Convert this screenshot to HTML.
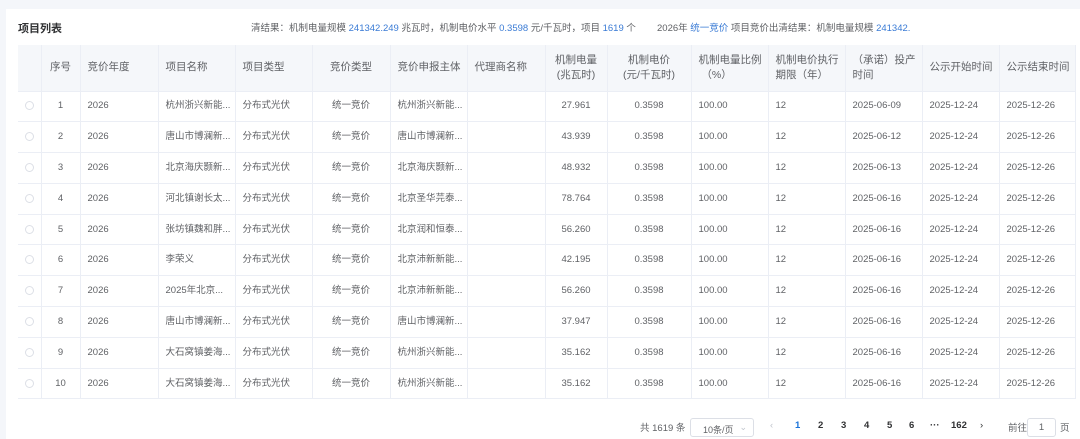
<!DOCTYPE html>
<html><head><meta charset="utf-8"><style>
*{box-sizing:border-box;margin:0;padding:0}
body{width:1080px;height:439px;background:#f4f6fa;font-family:"Liberation Sans","Noto Sans CJK SC",sans-serif;color:#606266;font-size:10px;overflow:hidden;position:relative}
.card{position:absolute;left:6px;top:9px;width:1074px;height:430px;background:#fff}
.title{position:absolute;left:18px;top:20px;font-size:11px;font-weight:bold;color:#303133}
.sum{position:absolute;left:251px;top:20px;font-size:9.5px;color:#606266;white-space:nowrap}
.sum b{font-weight:normal;color:#3a7bd5}
table{position:absolute;left:18px;top:45px;border-collapse:collapse;table-layout:fixed;width:1058px}
th{background:#f5f7fa;height:46px;font-weight:normal;color:#606266;font-size:10.5px;text-align:left;padding-left:7px;border-right:1px solid #ebeef5;border-bottom:1px solid #ebeef5;line-height:15px}
td{height:30.8px;border-right:1px solid #ebeef5;border-bottom:1px solid #ebeef5;padding-left:7px;white-space:nowrap;overflow:hidden;font-size:9.5px;line-height:14px;vertical-align:middle}
td span.t{display:inline-block;line-height:14px;vertical-align:middle}
.c{text-align:center;padding-left:0}
.r{display:inline-block;width:9px;height:9px;border:1px solid #dcdfe6;border-radius:50%;vertical-align:middle}
.pg{position:absolute;top:420px;font-size:9.5px;color:#303133}
</style></head><body>
<div class="card"></div>
<div class="title">项目列表</div>
<div class="sum">清结果：机制电量规模 <b>241342.249</b> 兆瓦时，机制电价水平 <b>0.3598</b> 元/千瓦时，项目 <b>1619</b> 个 &nbsp; &nbsp; &nbsp; &nbsp;2026年 <b>统一竞价</b> 项目竞价出清结果：机制电量规模 <b>241342.</b></div>
<table>
<colgroup><col style="width:23px"><col style="width:39px"><col style="width:78px"><col style="width:77px"><col style="width:77px"><col style="width:78px"><col style="width:77px"><col style="width:78px"><col style="width:62px"><col style="width:84px"><col style="width:77px"><col style="width:77px"><col style="width:77px"><col style="width:77px"><col></colgroup>
<tr><th></th><th class="c">序号</th><th>竞价年度</th><th>项目名称</th><th>项目类型</th><th class="c">竞价类型</th><th>竞价申报主体</th><th>代理商名称</th><th class="c">机制电量<br>(兆瓦时)</th><th class="c">机制电价<br>(元/千瓦时)</th><th>机制电量比例<br>&nbsp;（%）</th><th>机制电价执行<br>期限（年）</th><th>（承诺）投产<br>时间</th><th>公示开始时间</th><th>公示结束时间</th></tr>
<tr><td class="c"><span class="r"></span></td><td class="c">1</td><td>2026</td><td>杭州浙兴新能...</td><td>分布式光伏</td><td class="c">统一竞价</td><td>杭州浙兴新能...</td><td></td><td class="c">27.961</td><td class="c">0.3598</td><td>100.00</td><td>12</td><td>2025-06-09</td><td>2025-12-24</td><td>2025-12-26</td></tr>
<tr><td class="c"><span class="r"></span></td><td class="c">2</td><td>2026</td><td>唐山市博澜新...</td><td>分布式光伏</td><td class="c">统一竞价</td><td>唐山市博澜新...</td><td></td><td class="c">43.939</td><td class="c">0.3598</td><td>100.00</td><td>12</td><td>2025-06-12</td><td>2025-12-24</td><td>2025-12-26</td></tr>
<tr><td class="c"><span class="r"></span></td><td class="c">3</td><td>2026</td><td>北京海庆颢新...</td><td>分布式光伏</td><td class="c">统一竞价</td><td>北京海庆颢新...</td><td></td><td class="c">48.932</td><td class="c">0.3598</td><td>100.00</td><td>12</td><td>2025-06-13</td><td>2025-12-24</td><td>2025-12-26</td></tr>
<tr><td class="c"><span class="r"></span></td><td class="c">4</td><td>2026</td><td>河北镇谢长太...</td><td>分布式光伏</td><td class="c">统一竞价</td><td>北京圣华芫泰...</td><td></td><td class="c">78.764</td><td class="c">0.3598</td><td>100.00</td><td>12</td><td>2025-06-16</td><td>2025-12-24</td><td>2025-12-26</td></tr>
<tr><td class="c"><span class="r"></span></td><td class="c">5</td><td>2026</td><td>张坊镇魏和胖...</td><td>分布式光伏</td><td class="c">统一竞价</td><td>北京润和恒泰...</td><td></td><td class="c">56.260</td><td class="c">0.3598</td><td>100.00</td><td>12</td><td>2025-06-16</td><td>2025-12-24</td><td>2025-12-26</td></tr>
<tr><td class="c"><span class="r"></span></td><td class="c">6</td><td>2026</td><td>李荣义</td><td>分布式光伏</td><td class="c">统一竞价</td><td>北京沛新新能...</td><td></td><td class="c">42.195</td><td class="c">0.3598</td><td>100.00</td><td>12</td><td>2025-06-16</td><td>2025-12-24</td><td>2025-12-26</td></tr>
<tr><td class="c"><span class="r"></span></td><td class="c">7</td><td>2026</td><td>2025年北京...</td><td>分布式光伏</td><td class="c">统一竞价</td><td>北京沛新新能...</td><td></td><td class="c">56.260</td><td class="c">0.3598</td><td>100.00</td><td>12</td><td>2025-06-16</td><td>2025-12-24</td><td>2025-12-26</td></tr>
<tr><td class="c"><span class="r"></span></td><td class="c">8</td><td>2026</td><td>唐山市博澜新...</td><td>分布式光伏</td><td class="c">统一竞价</td><td>唐山市博澜新...</td><td></td><td class="c">37.947</td><td class="c">0.3598</td><td>100.00</td><td>12</td><td>2025-06-16</td><td>2025-12-24</td><td>2025-12-26</td></tr>
<tr><td class="c"><span class="r"></span></td><td class="c">9</td><td>2026</td><td>大石窝镇姜海...</td><td>分布式光伏</td><td class="c">统一竞价</td><td>杭州浙兴新能...</td><td></td><td class="c">35.162</td><td class="c">0.3598</td><td>100.00</td><td>12</td><td>2025-06-16</td><td>2025-12-24</td><td>2025-12-26</td></tr>
<tr><td class="c"><span class="r"></span></td><td class="c">10</td><td>2026</td><td>大石窝镇姜海...</td><td>分布式光伏</td><td class="c">统一竞价</td><td>杭州浙兴新能...</td><td></td><td class="c">35.162</td><td class="c">0.3598</td><td>100.00</td><td>12</td><td>2025-06-16</td><td>2025-12-24</td><td>2025-12-26</td></tr>
</table>
<div class="pg" style="left:640px;color:#606266">共 1619 条</div>
<div style="position:absolute;left:690px;top:418px;width:64px;height:19px;border:1px solid #dcdfe6;border-radius:3px;font-size:9px;padding:4px 0 0 12px;color:#606266">10条/页<span style="position:absolute;right:6px;top:3px;color:#c0c4cc">⌄</span></div>
<div class="pg" style="left:770px;color:#c0c4cc">‹</div>
<div class="pg" style="left:795px;color:#1a73d9;font-weight:bold">1</div>
<div class="pg" style="left:818px;font-weight:bold">2</div>
<div class="pg" style="left:841px;font-weight:bold">3</div>
<div class="pg" style="left:864px;font-weight:bold">4</div>
<div class="pg" style="left:887px;font-weight:bold">5</div>
<div class="pg" style="left:909px;font-weight:bold">6</div>
<div class="pg" style="left:930px;font-weight:bold">···</div>
<div class="pg" style="left:951px;font-weight:bold">162</div>
<div class="pg" style="left:980px">›</div>
<div class="pg" style="left:1008px;color:#606266">前往</div>
<div style="position:absolute;left:1027px;top:418px;width:29px;height:19px;border:1px solid #dcdfe6;border-radius:3px;font-size:9.5px;text-align:center;padding-top:3px">1</div>
<div class="pg" style="left:1060px;color:#606266">页</div>
</body></html>
